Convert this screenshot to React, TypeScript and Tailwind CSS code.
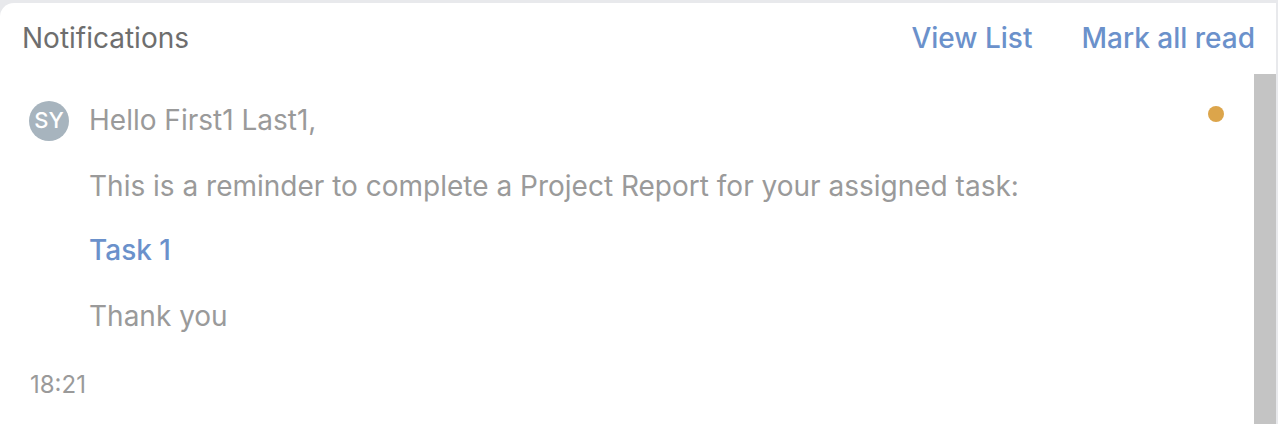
import React from "react";

export default function App() {
  return (
    <div
      className="h-[424px] w-[1278px] bg-[#e8e9ec] pt-[3px] pr-[2px] overflow-hidden"
      style={{ fontFamily: "Inter, 'Noto Sans', sans-serif" }}
    >
      <div className="h-full bg-white rounded-tl-[14px] flex flex-col">
        <div className="h-[71px] shrink-0 flex items-center justify-between pl-[22px] pr-[21px] pb-[2px]">
          <span className="text-[28px] text-[#6e6e6e]">Notifications</span>
          <div className="flex items-center gap-[49px] text-[28px] font-medium text-[#6b91cb]">
            <span>View List</span>
            <span>Mark all read</span>
          </div>
        </div>
        <div className="flex flex-1 min-h-0">
          <div className="flex-1 relative pt-[26px]">
            <div className="flex items-center pl-[29px]">
              <div className="w-[40px] h-[40px] rounded-full bg-[#a7b4be] flex items-center justify-center text-white text-[22px] font-medium">
                SY
              </div>
              <span className="ml-[20px] text-[28px] text-[#9a9a9a] -mt-[1px]">Hello First1 Last1,</span>
            </div>
            <div className="absolute right-[30px] top-[32px] w-[16px] h-[16px] rounded-full bg-[#dca54b]" />
            <div className="pl-[89px] text-[28px] text-[#9a9a9a]">
              <p className="mt-[27px] leading-[36px]">
                This is a reminder to complete a Project Report for your assigned task:
              </p>
              <p className="mt-[28px] leading-[36px] text-[#6b91cb] font-medium">Task 1</p>
              <p className="mt-[30px] leading-[36px]">Thank you</p>
            </div>
            <div className="pl-[30px] mt-[33px] text-[24px] text-[#9a9a9a]">18:21</div>
          </div>
          <div className="w-[22px] shrink-0 bg-[#c4c4c4]" />
        </div>
      </div>
    </div>
  );
}
